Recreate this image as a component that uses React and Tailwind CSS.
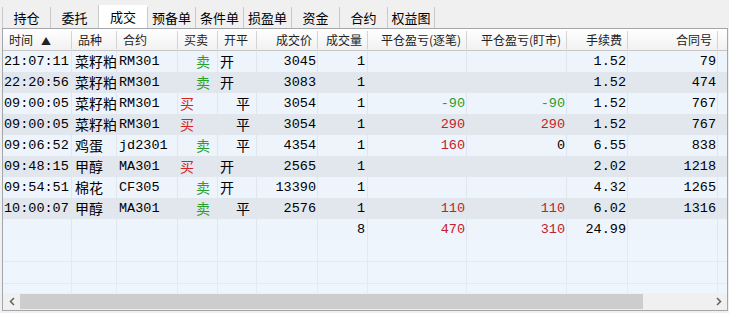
import React from 'react';

const tabs = ['持仓', '委托', '成交', '预备单', '条件单', '损盈单', '资金', '合约', '权益图'];

const columns = [
  { title: '时间', align: 'left' },
  { title: '品种', align: 'left' },
  { title: '合约', align: 'left' },
  { title: '买卖', align: 'left' },
  { title: '开平', align: 'left' },
  { title: '成交价', align: 'right' },
  { title: '成交量', align: 'right' },
  { title: '平仓盈亏(逐笔)', align: 'right' },
  { title: '平仓盈亏(盯市)', align: 'right' },
  { title: '手续费', align: 'right' },
  { title: '合同号', align: 'right' },
];

const trades = [
  ['21:07:11', '菜籽粕', 'RM301', '卖', '开', '3045', '1', '', '', '1.52', '79'],
  ['22:20:56', '菜籽粕', 'RM301', '卖', '开', '3083', '1', '', '', '1.52', '474'],
  ['09:00:05', '菜籽粕', 'RM301', '买', '平', '3054', '1', '-90', '-90', '1.52', '767'],
  ['09:00:05', '菜籽粕', 'RM301', '买', '平', '3054', '1', '290', '290', '1.52', '767'],
  ['09:06:52', '鸡蛋', 'jd2301', '卖', '平', '4354', '1', '160', '0', '6.55', '838'],
  ['09:48:15', '甲醇', 'MA301', '买', '开', '2565', '1', '', '', '2.02', '1218'],
  ['09:54:51', '棉花', 'CF305', '卖', '开', '13390', '1', '', '', '4.32', '1265'],
  ['10:00:07', '甲醇', 'MA301', '卖', '平', '2576', '1', '110', '110', '6.02', '1316'],
];

const totals = ['', '', '', '', '', '', '8', '470', '310', '24.99', ''];

const gridCols = 'grid grid-cols-[69px_45px_61px_40px_39px_61px_50px_99px_100px_61px_90px_1fr]';

// profit/loss colour: negative green, positive red, zero plain
const pnlClass = (v) => {
  if (!v || v === '0') return 'text-black';
  return v.startsWith('-') ? 'text-[#2c9a2c]' : 'text-[#c2202c]';
};

const Row = ({ cells, index }) => {
  const bg = index % 2 === 0 ? 'bg-[#eef4fb]' : 'bg-[#e2e7ed]';
  const [time, kind, code, side, oc, price, qty, pnl1, pnl2, fee, id] = cells;
  const cell = 'h-[21px] leading-[21px] whitespace-nowrap overflow-hidden border-r border-[#dfe6ee]';
  const cjk = "font-['Noto_Sans_CJK_SC',sans-serif] text-[14px]";
  return (
    <div className={`${gridCols} ${bg}`}>
      <div className={`${cell} pl-[1px]`}>{time}</div>
      <div className={`${cell} pl-[3px] ${cjk}`}>{kind}</div>
      <div className={`${cell} pl-[2px]`}>{code}</div>
      <div className={`${cell} pl-[2px] ${cjk}`}>
        {side === '买' && <span className="text-[#d42424]">买</span>}
        {side === '卖' && <span className="ml-[16px] text-[#2aa02a]">卖</span>}
      </div>
      <div className={`${cell} pl-[2px] ${cjk}`}>
        {oc === '开' && <span>开</span>}
        {oc === '平' && <span className="ml-[16px]">平</span>}
      </div>
      <div className={`${cell} pr-[1px] text-right`}>{price}</div>
      <div className={`${cell} pr-[2px] text-right`}>{qty}</div>
      <div className={`${cell} pr-[1px] text-right ${pnlClass(pnl1)}`}>{pnl1}</div>
      <div className={`${cell} pr-[1px] text-right ${pnlClass(pnl2)}`}>{pnl2}</div>
      <div className={`${cell} pr-[1px] text-right`}>{fee}</div>
      <div className={`${cell} pr-[1px] text-right`}>{id}</div>
      <div className="h-[21px]" />
    </div>
  );
};

const EmptyRow = () => (
  <div className={`${gridCols} border-b border-[#e3eaf2]`}>
    {columns.map((c) => (
      <div key={c.title} className="h-[21px] border-r border-[#e3eaf2]" />
    ))}
    <div className="h-[21px]" />
  </div>
);

export default function App() {
  return (
    <div className="w-[729px] h-[313px] bg-[#f0f0f0] flex flex-col text-black overflow-hidden">
      {/* tab strip */}
      <div className="h-[28px] flex items-end pl-[2px] font-['Noto_Sans_CJK_SC',sans-serif] text-[13px]">
        {tabs.map((t, i) => {
          const active = t === '成交';
          return (
            <div
              key={t}
              className={`flex items-center justify-center border-l border-[#c9c9c9] ${
                i === tabs.length - 1 ? 'border-r' : ''
              } ${
                active ? 'h-[23px] w-[49px] bg-white' : 'h-[21px] w-[48px] bg-[#f0f0f0]'
              }`}
            >
              {t}
            </div>
          );
        })}
      </div>

      {/* grid panel */}
      <div className="ml-[2px] w-[726px] h-[283px] border border-[#a3a6ab] bg-[#eef5fc] flex flex-col">
        <div className={`${gridCols} h-[22px] bg-gradient-to-b from-white to-[#f1f1f1] border-b border-[#c6c6c6] font-['Noto_Sans_CJK_SC',sans-serif] text-[12px] text-[#222]`}>
          {columns.map((c, i) => (
            <div key={c.title} className="flex items-center h-full">
              <div
                className={`flex-1 whitespace-nowrap ${
                  c.align === 'right' ? 'text-right pr-[5px]' : 'pl-[6px]'
                }`}
              >
                {c.title}
                {i === 0 && <span className="ml-[8px] text-[10px]">▲</span>}
              </div>
              <div className="w-px h-[18px] bg-[#d4d4d4]" />
            </div>
          ))}
          <div />
        </div>

        <div className="flex-1 overflow-hidden font-['Liberation_Mono','Noto_Sans_CJK_SC',monospace] text-[13.5px]">
          {trades.map((r, i) => (
            <Row key={i} cells={r} index={i} />
          ))}
          <Row cells={totals} index={0} />
          <EmptyRow />
          <EmptyRow />
          <EmptyRow />
        </div>

        {/* horizontal scrollbar */}
        <div className="h-[17px] flex bg-[#f0f0f0]">
          <div className="w-[17px] flex items-center justify-center text-[#606060]">
            <svg width="6" height="9" viewBox="0 0 6 9">
              <path d="M5 1L1.5 4.5L5 8" fill="none" stroke="currentColor" strokeWidth="1.5" />
            </svg>
          </div>
          <div className="w-[623px] my-[1px] bg-[#cdcdcd]" />
          <div className="flex-1" />
          <div className="w-[17px] flex items-center justify-center text-[#606060]">
            <svg width="6" height="9" viewBox="0 0 6 9">
              <path d="M1 1L4.5 4.5L1 8" fill="none" stroke="currentColor" strokeWidth="1.5" />
            </svg>
          </div>
        </div>
      </div>
    </div>
  );
}
